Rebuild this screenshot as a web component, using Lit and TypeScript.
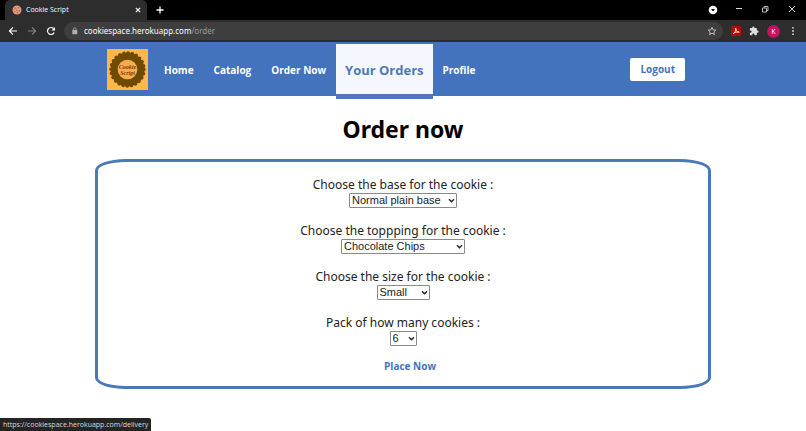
import { LitElement, html, css, svg } from "lit";
import { customElement, property } from "lit/decorators.js";
import { classMap } from "lit/directives/class-map.js";

const FONT = css`"Noto Sans", "Open Sans", sans-serif`;
const NARROW = css`"Open Sans", "Noto Sans", sans-serif`;

@customElement("browser-bar")
class BrowserBar extends LitElement {
  static styles = css`
    :host { display: block; font-family: ${NARROW}; color: #fff; }
    * { box-sizing: border-box; }
    button { border: 0; background: none; color: inherit; padding: 0; margin: 0; display: flex; align-items: center; justify-content: center; flex: none; }
    svg { display: block; }
    .tabs { display: flex; align-items: center; height: 20px; background: #000; padding-left: 5px; }
    .tab { display: flex; align-items: center; width: 142px; height: 20px; padding: 0 5px 0 7px; background: #2d2d2d; border-radius: 5px 5px 0 0; }
    .title { flex: 1; margin-left: 4px; font-size: 7px; line-height: 10px; white-space: nowrap; }
    .new { margin-left: 8px; }
    .window { margin-left: auto; display: flex; align-items: center; gap: 17px; padding-right: 9px; }
    .tools { display: flex; align-items: center; height: 22px; background: #2d2d2d; padding: 0 8px; }
    .nav { display: flex; gap: 9px; width: 56px; }
    .dim { color: #858585; }
    .omni { flex: 1; min-width: 0; height: 18px; border-radius: 9px; background: #3e3e3e; display: flex; align-items: center; padding: 0 6px 0 7px; }
    .url { flex: 1; margin-left: 5px; font-family: ${FONT}; font-size: 8px; line-height: 12px; white-space: nowrap; }
    .path { color: #9a9a9a; }
    .ext { display: flex; align-items: center; gap: 8px; margin-left: 8px; }
    .avatar { width: 13px; height: 13px; border-radius: 50%; background: #c51162; color: #fff; font-family: inherit; font-size: 7px; line-height: 13px; }
  `;
  render() {
    return html`
      <div class="tabs">
        <div class="tab">
          <svg width="10" height="10" viewBox="0 0 10 10"><circle cx="5" cy="5" r="4.5" fill="#e2997a"/><g fill="#b0654b"><circle cx="3" cy="3.2" r=".8"/><circle cx="6.4" cy="2.8" r=".8"/><circle cx="4.8" cy="5.3" r=".8"/><circle cx="7.4" cy="5.8" r=".8"/><circle cx="2.7" cy="6.6" r=".7"/><circle cx="5.5" cy="7.8" r=".7"/></g></svg>
          <span class="title">Cookie Script</span>
          <button aria-label="Close tab"><svg width="8" height="8" viewBox="0 0 8 8" stroke="#fff" stroke-width="1.1"><path d="M1.8 1.8l4.4 4.4M6.2 1.8L1.8 6.2"/></svg></button>
        </div>
        <button class="new" aria-label="New tab"><svg width="10" height="10" viewBox="0 0 10 10" stroke="#fff" stroke-width="1.3"><path d="M5 1.5v7M1.5 5h7"/></svg></button>
        <div class="window">
          <button aria-label="Search tabs"><svg width="10" height="10" viewBox="0 0 10 10"><circle cx="5" cy="5" r="4.3" fill="#fff"/><path d="M3 4h4L5 6.6z" fill="#000"/></svg></button>
          <button aria-label="Minimize"><svg width="8" height="10" viewBox="0 0 8 10"><path d="M1 3.5h6" stroke="#ddd"/></svg></button>
          <button aria-label="Restore"><svg width="10" height="10" viewBox="0 0 10 10" fill="none" stroke="#ccc" stroke-width=".9"><path d="M2.500 3h4v4h-4zM4 2.800V1.500h4v4H6.800"/></svg></button>
          <button aria-label="Close"><svg width="10" height="10" viewBox="0 0 10 10" stroke="#ddd"><path d="M2 1l6 6M8 1l-6 6"/></svg></button>
        </div>
      </div>
      <div class="tools">
        <div class="nav">
          <button aria-label="Back"><svg width="10" height="10" viewBox="0 0 10 10" fill="none" stroke="#fff" stroke-width="1.1"><path d="M9 5H1.5M5 1.4L1.4 5 5 8.6"/></svg></button>
          <button class="dim" aria-label="Forward"><svg width="10" height="10" viewBox="0 0 10 10" fill="none" stroke="currentColor" stroke-width="1.1"><path d="M1 5h7.5M5 1.4L8.6 5 5 8.6"/></svg></button>
          <button aria-label="Reload"><svg width="10" height="10" viewBox="0 0 10 10" fill="none" stroke="#fff" stroke-width="1.2"><path d="M8.2 6.5A3.5 3.5 0 1 1 7.6 2.6"/><path d="M9 .9v3.6H5.4z" fill="#fff" stroke="none"/></svg></button>
        </div>
        <div class="omni">
          <svg width="8" height="8" viewBox="0 0 8 8"><rect x="1.3" y="3" width="5" height="4.3" rx=".5" fill="#b0b0b0"/><path d="M2.5 3V2.1a1.3 1.3 0 0 1 2.6 0V3" fill="none" stroke="#b0b0b0" stroke-width=".8"/></svg>
          <span class="url">cookiespace.herokuapp.com<span class="path">/order</span></span>
          <button aria-label="Bookmark"><svg width="10" height="10" viewBox="0 0 10 10" fill="none" stroke="#ccc" stroke-width=".9"><path d="M5 1.3l1.1 2.5 2.7.3-2 1.8.6 2.7L5 7.2 2.6 8.6l.6-2.7-2-1.8 2.7-.3z"/></svg></button>
        </div>
        <div class="ext">
          <button aria-label="PDF"><svg width="10" height="10" viewBox="0 0 10 10"><rect width="10" height="10" rx="1" fill="#b30b00"/><path d="M2 7.8C4 6.6 5 4.5 4.7 2.2 5 5 6 6 8.3 6.1 6 5.6 3.6 6.4 2 7.8z" fill="none" stroke="#fff" stroke-width=".8"/></svg></button>
          <button aria-label="Extensions"><svg width="10" height="10" viewBox="0 0 24 24" fill="#ddd"><path d="M20.5 11H19V7a2 2 0 0 0-2-2h-4V3.5a2.5 2.5 0 0 0-5 0V5H4a2 2 0 0 0-2 2v3.8h1.5a2.7 2.7 0 0 1 0 5.4H2V20a2 2 0 0 0 2 2h3.8v-1.5a2.7 2.7 0 0 1 5.4 0V22H17a2 2 0 0 0 2-2v-4h1.5a2.5 2.5 0 0 0 0-5z"/></svg></button>
          <button class="avatar" aria-label="Profile">K</button>
          <button aria-label="Menu"><svg width="10" height="10" viewBox="0 0 10 10" fill="#ddd"><circle cx="5" cy="1.8" r=".9"/><circle cx="5" cy="5" r=".9"/><circle cx="5" cy="8.2" r=".9"/></svg></button>
        </div>
      </div>`;
  }
}

@customElement("site-nav")
class SiteNav extends LitElement {
  static styles = css`
    :host { display: block; font-family: ${NARROW}; }
    * { box-sizing: border-box; }
    nav { display: flex; align-items: center; height: 54px; background: #4473bd; padding: 0 121px 0 107px; }
    .logo { display: block; width: 41px; height: 41px; flex: none; }
    .script { font: italic 700 6px "Liberation Serif", serif; fill: #7a3c10; text-anchor: middle; }
    .links { display: flex; align-items: flex-start; height: 50px; margin-left: 6px; }
    .link { padding: 0 10px; color: #fff; font-size: 10px; line-height: 52px; font-weight: 700; text-decoration: none; white-space: nowrap; }
    .active { height: 55px; padding: 0 9px; background: #f4f8fe; color: #4d78ba; font-size: 13px; border-bottom: 5px solid #4d78ba; }
    button { margin-left: auto; height: 23px; padding: 0 10px; border: 0; border-radius: 2px; background: #fff; color: #4473bd; font: 700 10px/23px ${NARROW}; }
  `;
  render() {
    const links = ["Home", "Catalog", "Order Now", "Your Orders", "Profile"];
    return html`<nav>
      <svg class="logo" viewBox="0 0 41 41">
        <rect width="41" height="41" fill="#feb84a"/>
        <circle cx="20.5" cy="20.5" r="17" fill="#6f4b00"/>
        <circle cx="20.5" cy="20.5" r="16.6" fill="none" stroke="#6f4b00" stroke-width="3.4" stroke-linecap="round" stroke-dasharray="0.1 4.246"/>
        <circle cx="20.5" cy="20.5" r="9.8" fill="#f9ad50"/>
        ${svg`<text class="script" x="20.5" y="19.5">Cookie</text><text class="script" x="20.5" y="25.5">Script</text>`}
      </svg>
      <div class="links">${links.map((l) => html`<a href="#" class=${classMap({ link: true, active: l === "Your Orders" })}>${l}</a>`)}</div>
      <button>Logout</button>
    </nav>`;
  }
}

@customElement("choice-field")
class ChoiceField extends LitElement {
  @property() label = "";
  @property({ type: Array }) options: string[] = [];
  @property({ type: Number }) width = 60;
  static styles = css`
    :host { display: flex; flex-direction: column; align-items: center; font-family: ${FONT}; }
    label { font-size: 12px; line-height: 17px; color: #222; white-space: nowrap; }
    .box { display: grid; }
    .box > * { grid-area: 1 / 1; }
    select { appearance: none; box-sizing: border-box; width: 100%; height: 15px; margin: 0; padding: 0 2px; border: 1px solid #8a8a8a; border-radius: 1px; background: #fff; color: #222; font: 11px/13px "Liberation Sans", Arial, sans-serif; }
    svg { justify-self: end; align-self: center; margin-right: 2px; pointer-events: none; }
  `;
  render() {
    return html`<label for="s">${this.label}</label>
      <div class="box" style="width:${this.width}px">
        <select id="s">${this.options.map((o) => html`<option>${o}</option>`)}</select>
        <svg width="7" height="7" viewBox="0 0 7 7" fill="none" stroke="#222" stroke-width="1.4"><path d="M1 2.2l2.5 2.5L6 2.2"/></svg>
      </div>`;
  }
}

@customElement("app-root")
class AppRoot extends LitElement {
  static styles = css`
    :host { display: block; min-height: 100vh; background: #fff; font-family: ${FONT}; }
    h1 { margin: 17px 0 14px; text-align: center; font-size: 23px; line-height: 32px; font-weight: 700; color: #000; }
    form { box-sizing: border-box; margin: 0 95px; padding: 14px 0; border: 3px solid #4a78b8; border-radius: 5%; display: flex; flex-direction: column; align-items: center; gap: 14px; }
    .place { margin-left: 14px; border: 0; padding: 0; background: none; color: #4473bd; font: 700 10px/12px ${NARROW}; }
    .status { position: fixed; left: 0; bottom: 0; padding: 0 3px; height: 13px; background: #242424; border-radius: 0 2px 0 0; color: #ddd; font-family: ${NARROW}; font-size: 7px; line-height: 13px; }
  `;
  render() {
    return html`
      <browser-bar></browser-bar>
      <site-nav></site-nav>
      <main>
        <h1>Order now</h1>
        <form>
          <choice-field label="Choose the base for the cookie :" .options=${["Normal plain base"]} .width=${108}></choice-field>
          <choice-field label="Choose the toppping for the cookie :" .options=${["Chocolate Chips"]} .width=${124}></choice-field>
          <choice-field label="Choose the size for the cookie :" .options=${["Small"]} .width=${53}></choice-field>
          <choice-field label="Pack of how many cookies :" .options=${["6"]} .width=${27}></choice-field>
          <button class="place" type="button">Place Now</button>
        </form>
      </main>
      <div class="status">https://cookiespace.herokuapp.com/delivery</div>`;
  }
}
